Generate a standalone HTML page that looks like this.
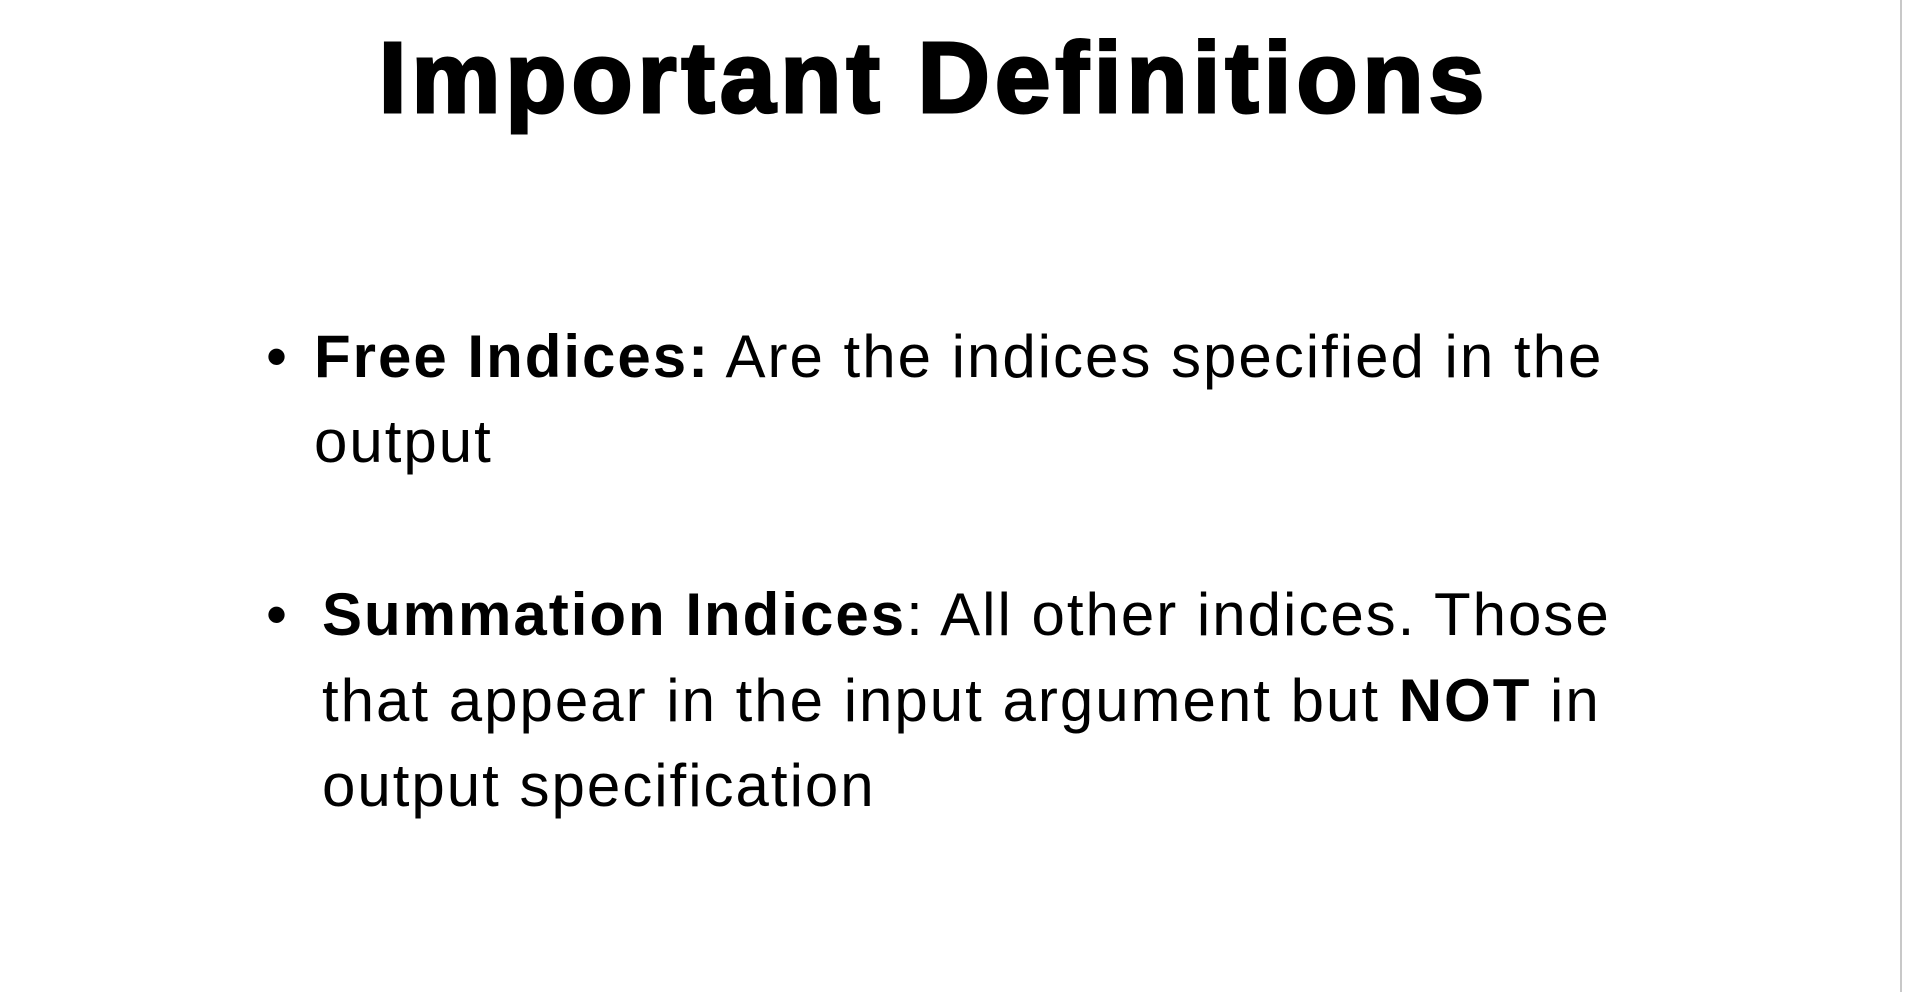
<!DOCTYPE html>
<html><head><meta charset="utf-8">
<style>
html,body{margin:0;padding:0;background:#fff;}
body{width:1911px;height:992px;position:relative;overflow:hidden;font-family:"Liberation Sans",sans-serif;color:#000;}
.t{position:absolute;left:0;width:1868px;text-align:center;top:28px;font-size:100px;line-height:100px;font-weight:bold;-webkit-text-stroke:3px #000;letter-spacing:5px;}
.l{position:absolute;font-size:60px;line-height:60px;white-space:nowrap;letter-spacing:2px;}
.b{position:absolute;font-size:60px;line-height:60px;}
.edge{position:absolute;left:1900px;top:0;width:2px;height:992px;background:#c8c8c8;}
</style></head><body>
<div class="t">Important Definitions</div>
<div class="b" style="left:266px;top:327px">•</div>
<div class="l" style="left:314px;top:327px"><b>Free Indices:</b> Are the indices specified in the</div>
<div class="l" style="left:314px;top:412px">output</div>
<div class="b" style="left:266px;top:585px">•</div>
<div class="l" style="left:322px;top:585px"><b>Summation Indices</b>: All other indices. Those</div>
<div class="l" style="left:322px;top:671px">that appear in the input argument but <b>NOT</b> in</div>
<div class="l" style="left:322px;top:756px">output specification</div>
<div class="edge"></div>
</body></html>
